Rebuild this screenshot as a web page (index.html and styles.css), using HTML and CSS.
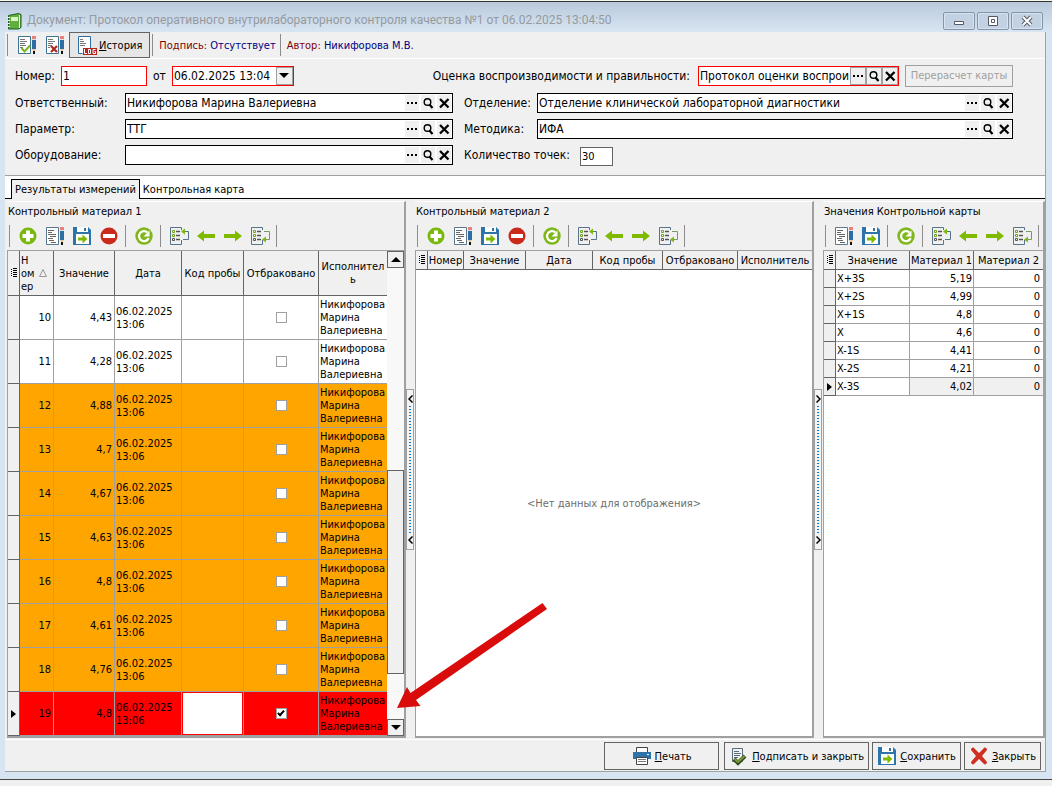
FILE: index.html
```html
<!DOCTYPE html>
<html lang="ru">
<head>
    <meta charset="UTF-8">
    <meta name="viewport" content="width=device-width, initial-scale=1.0">
    <title>Протокол оперативного внутрилабораторного контроля качества</title>
    <link rel="stylesheet" href="styles.css">
</head>
<body>
    <!-- Icon set -->
    <svg class="sprite" aria-hidden="true">
        <symbol id="i-sheet" viewBox="0 0 20 20">
            <path d="M1.5 1.5h12v17h-12z" fill="#fff" stroke="#5a7890"/>
            <path d="M3 4.500h6M3 6.500h4M3 8.500h8M5 10.500h6M3 12.500h5M4 14.500h5M6 16.500h5" stroke="#666"/>
        </symbol>
        <symbol id="i-pen" viewBox="0 0 4 18">
            <path d="M0 0h4v3H0z" fill="#e8807c"/>
            <path d="M0 3h4v1H0z" fill="#ddd"/>
            <path d="M0 4h4v9H0z" fill="#2e6da4"/>
            <path d="M0 13h4l-1 2H1z" fill="#e8c9a0"/>
            <path d="M1 15h2v3H1z" fill="#111"/>
        </symbol>
        <symbol id="i-edit" viewBox="0 0 20 20">
            <use href="#i-sheet"/>
            <use href="#i-pen" x="15" y="1" width="4" height="18"/>
        </symbol>
        <symbol id="i-sign" viewBox="0 0 20 20">
            <path d="M1.500 1.500h12v17h-12z" fill="#fff" stroke="#3f7390"/>
            <path d="M3 4.500h5M3 6.500h7M3 8.500h5M3 10.500h6M3 12.500h3" stroke="#777"/>
            <path d="M4.500 13l3 3.500 5.500-6" fill="none" stroke="#7ab51d" stroke-width="2"/>
            <use href="#i-pen" x="15" y="1" width="4" height="18"/>
        </symbol>
        <symbol id="i-unsign" viewBox="0 0 20 20">
            <path d="M1.500 1.500h12v17h-12z" fill="#fff" stroke="#3f7390"/>
            <path d="M3 4.500h5M3 6.500h7M3 8.500h5M3 10.500h4M3 12.500h2" stroke="#777"/>
            <path d="M6 11l6 6M12 11l-6 6" stroke="#b3271e" stroke-width="2.200"/>
            <use href="#i-pen" x="15" y="1" width="4" height="18"/>
        </symbol>
        <symbol id="i-log" viewBox="0 0 20 20">
            <path d="M1.500 18.500v-17h12v12M1.500 18.500h4" fill="none" stroke="#2e6da4"/>
            <path d="M2 2h11v11H6v5H2z" fill="#fff"/>
            <path d="M3 4.500h3M3 6.500h4M3 8.500h6M3 10.500h5" stroke="#777"/>
            <path d="M6 13h14v7H6z" fill="#b3271e"/>
            <path d="M7.500 14v4.500H10M11.500 14.500h2v4h-2zM18.500 14.500h-2.500v4h2.500v-2h-1" fill="none" stroke="#fff"/>
        </symbol>
        <symbol id="i-add" viewBox="0 0 20 20">
            <circle cx="10" cy="10" r="8.500" fill="#7ab80e"/>
            <path d="M10 4.500v11M4.500 10h11" stroke="#fff" stroke-width="4"/>
        </symbol>
        <symbol id="i-remove" viewBox="0 0 20 20">
            <circle cx="10" cy="10" r="8.500" fill="#c92a1c"/>
            <path d="M4 10h12" stroke="#fff" stroke-width="4"/>
        </symbol>
        <symbol id="i-save" viewBox="0 0 20 20">
            <path d="M1 1h15l3 3v15H1z" fill="#2d74aa"/>
            <path d="M5 1h11v5H5zM4 8h13v10H4z" fill="#fff"/>
            <path d="M12 2h2v3h-2z" fill="#2d74aa"/>
            <path d="M6 11.500h4.500V8.500l5 4.500-5 4.500v-3H6z" fill="#7fba00"/>
        </symbol>
        <symbol id="i-refresh" viewBox="0 0 20 20">
            <circle cx="10" cy="10" r="8.700" fill="#7fb71c"/>
            <path d="M13.500 6.500A5 5 0 1 0 14.700 12" fill="none" stroke="#fff" stroke-width="2.200"/>
            <path d="M15.500 4.500v6h-6z" fill="#fff"/>
        </symbol>
        <symbol id="i-tree" viewBox="0 0 20 20">
            <path d="M12.500 4V1.500h-11v17h11V14" fill="none" stroke="#58748a"/>
            <path d="M3.500 4.500h2v2h-2zM3.500 8.500h2v2h-2z" fill="none" stroke="#6fa51b"/>
            <path d="M3.500 12.500h2v2h-2z" fill="none" stroke="#555"/>
            <path d="M7 5.500h4M7 9.500h4M7 13.500h4" stroke="#555" stroke-width="1.400"/>
        </symbol>
        <symbol id="i-first" viewBox="0 0 20 20">
            <use href="#i-tree"/>
            <path d="M14 13.500h5.500v-8H13" fill="none" stroke="#58748a"/>
            <path d="M12 5.500l4-3v6z" fill="#7ab80e"/>
        </symbol>
        <symbol id="i-last" viewBox="0 0 20 20">
            <use href="#i-tree"/>
            <path d="M14 5.500h5.500v8H15" fill="none" stroke="#7a9a60"/>
            <path d="M12 13.500l4-3v6z" fill="#7ab80e"/>
        </symbol>
        <symbol id="i-left" viewBox="0 0 20 20">
            <path d="M1 10l7-5.500v3.500h11v4H8v3.500z" fill="#7fba00"/>
        </symbol>
        <symbol id="i-right" viewBox="0 0 20 20">
            <path d="M19 10l-7-5.500v3.500H1v4h11v3.500z" fill="#7fba00"/>
        </symbol>
        <symbol id="i-print" viewBox="0 0 20 20">
            <path d="M4.500 1.500h11v6h-11z" fill="#fff" stroke="#444"/>
            <path d="M1 6h18v7H1z" fill="#2e74ab"/>
            <path d="M15 8h2v1h-2z" fill="#fff"/>
            <path d="M4.500 11.500h11v7h-11z" fill="#fff" stroke="#444"/>
            <path d="M6 13.500h8M6 15.500h8" stroke="#777"/>
        </symbol>
        <symbol id="i-approve" viewBox="0 0 20 20">
            <path d="M3.500 2.500h10v13h-10z" fill="#eef2f5" stroke="#5a6c78"/>
            <path d="M5 5.500h5M5 7.500h7M5 9.500h6M5 11.500h4" stroke="#5a6c78"/>
            <path d="M5 13l4 4 7-7" fill="none" stroke="#35491c" stroke-width="4"/>
            <path d="M5.500 13l3.500 3 6.500-6" fill="none" stroke="#7a9e3d" stroke-width="2"/>
        </symbol>
        <symbol id="i-cancel" viewBox="0 0 20 20">
            <path d="M2 3c1-1 2-2 3-1l5 5 5-5c1-1 3 0 3 2l-5 6 5 6c0 2-2 3-3 2l-5-5-5 5c-1 1-3 0-3-2l5-6-5-6z" fill="#cf3021"/>
        </symbol>
        <symbol id="i-book" viewBox="0 0 16 18">
            <path d="M1.500 3.500l10-2 2.500 1v13l-2.500 1.500h-10z" fill="#5fae3e" stroke="#1f5b25"/>
            <path d="M4 5h7v4H4z" fill="#d8f3c8"/>
            <path d="M12.500 3v13" stroke="#f4f4ec"/>
            <path d="M0 5.500h3M0 8.500h3M0 11.500h3M0 14.500h3" stroke="#eee"/>
        </symbol>
        <symbol id="i-dots" viewBox="0 0 14 14">
            <path d="M2 6h2v2H2zM6 6h2v2H6zM10 6h2v2h-2z"/>
        </symbol>
        <symbol id="i-find" viewBox="0 0 14 14">
            <circle cx="6.500" cy="6" r="3.300" fill="none" stroke="#000" stroke-width="1.400"/>
            <path d="M8.500 8.500l3 3.500" stroke="#000" stroke-width="2.200"/>
        </symbol>
        <symbol id="i-x" viewBox="0 0 14 14">
            <path d="M3 3l8.500 8.500M11.500 3L3 11.500" stroke="#000" stroke-width="2.300"/>
        </symbol>
        <symbol id="i-rows" viewBox="0 0 8 10">
            <path d="M1 1.500h1M1 3.500h1M1 5.500h1M1 7.500h1M3 .500h4M3 2.500h4M3 4.500h4M3 6.500h4M3 8.500h4" stroke="#000"/>
        </symbol>
    </svg>

    <div class="window">
        <header class="titlebar">
            <svg class="book"><use href="#i-book"/></svg>
            <h1>Документ: Протокол оперативного внутрилабораторного контроля качества №1 от 06.02.2025 13:04:50</h1>
            <button type="button" class="win-btn" aria-label="Свернуть"><svg viewBox="0 0 14 12"><path d="M2.500 6.500h9v3h-9z" fill="#fff" stroke="#555a66"/></svg></button>
            <button type="button" class="win-btn" aria-label="Развернуть"><svg viewBox="0 0 14 12"><path d="M2.500 1.500h9v9h-9z" fill="#fff" stroke="#555a66"/><path d="M5.500 4.500h3v3h-3z" fill="#fff" stroke="#555a66"/></svg></button>
            <button type="button" class="win-btn" aria-label="Закрыть окно"><svg viewBox="0 0 14 12"><path d="M3 2l8 8M11 2l-8 8" stroke="#555a66" stroke-width="4"/><path d="M3 2l8 8M11 2l-8 8" stroke="#fff" stroke-width="2"/></svg></button>
        </header>

        <div class="client">
            <div class="main-tools">
                <i class="sep"></i>
                <button type="button" class="tool" aria-label="Подписать"><svg class="icon"><use href="#i-sign"/></svg></button>
                <button type="button" class="tool" aria-label="Снять подпись"><svg class="icon"><use href="#i-unsign"/></svg></button>
                <button type="button" class="history"><svg class="icon"><use href="#i-log"/></svg><span><u>И</u>стория</span></button>
                <i class="sep"></i>
                <p class="info">Подпись: <span>Отсутствует</span></p>
                <i class="sep"></i>
                <p class="info">Автор: <span>Никифорова М.В.</span></p>
            </div>

            <form class="doc-form">
                <div class="form-row">
                    <label for="num">Номер:</label>
                    <input type="text" id="num" class="num required" value="1">
                    <label for="date">от</label>
                    <div class="date required">
                        <input type="text" id="date" value="06.02.2025 13:04">
                        <button type="button" aria-label="Календарь"><svg viewBox="0 0 10 6"><path d="M0 0h10L5 5z"/></svg></button>
                    </div>
                    <label for="score" class="push">Оценка воспроизводимости и правильности:</label>
                    <div class="lookup framed required score">
                        <input type="text" id="score" value="Протокол оценки воспроизводимости">
                        <button type="button" aria-label="Выбрать"><svg><use href="#i-dots"/></svg></button>
                        <button type="button" aria-label="Найти"><svg><use href="#i-find"/></svg></button>
                        <button type="button" aria-label="Очистить"><svg><use href="#i-x"/></svg></button>
                    </div>
                    <button type="button" class="recalc" disabled>Перерасчет карты</button>
                </div>
                <div class="form-grid">
                    <label for="person">Ответственный:</label>
                    <div class="lookup">
                        <input type="text" id="person" value="Никифорова Марина Валериевна">
                        <button type="button" aria-label="Выбрать"><svg><use href="#i-dots"/></svg></button>
                        <button type="button" aria-label="Найти"><svg><use href="#i-find"/></svg></button>
                        <button type="button" aria-label="Очистить"><svg><use href="#i-x"/></svg></button>
                    </div>
                    <label for="dept">Отделение:</label>
                    <div class="lookup">
                        <input type="text" id="dept" value="Отделение клинической лабораторной диагностики">
                        <button type="button" aria-label="Выбрать"><svg><use href="#i-dots"/></svg></button>
                        <button type="button" aria-label="Найти"><svg><use href="#i-find"/></svg></button>
                        <button type="button" aria-label="Очистить"><svg><use href="#i-x"/></svg></button>
                    </div>
                    <label for="param">Параметр:</label>
                    <div class="lookup">
                        <input type="text" id="param" value="ТТГ">
                        <button type="button" aria-label="Выбрать"><svg><use href="#i-dots"/></svg></button>
                        <button type="button" aria-label="Найти"><svg><use href="#i-find"/></svg></button>
                        <button type="button" aria-label="Очистить"><svg><use href="#i-x"/></svg></button>
                    </div>
                    <label for="method">Методика:</label>
                    <div class="lookup">
                        <input type="text" id="method" value="ИФА">
                        <button type="button" aria-label="Выбрать"><svg><use href="#i-dots"/></svg></button>
                        <button type="button" aria-label="Найти"><svg><use href="#i-find"/></svg></button>
                        <button type="button" aria-label="Очистить"><svg><use href="#i-x"/></svg></button>
                    </div>
                    <label for="device">Оборудование:</label>
                    <div class="lookup">
                        <input type="text" id="device" value="">
                        <button type="button" aria-label="Выбрать"><svg><use href="#i-dots"/></svg></button>
                        <button type="button" aria-label="Найти"><svg><use href="#i-find"/></svg></button>
                        <button type="button" aria-label="Очистить"><svg><use href="#i-x"/></svg></button>
                    </div>
                    <div class="points">
                        <label for="points">Количество точек:</label>
                        <input type="text" id="points" value="30">
                    </div>
                </div>
            </form>

            <div class="tabs" role="tablist">
                <button type="button" role="tab" aria-selected="true" class="tab active">Результаты измерений</button>
                <button type="button" role="tab" aria-selected="false" class="tab">Контрольная карта</button>
            </div>

            <main class="panels">
                <section class="panel">
                    <h2>Контрольный материал 1</h2>
                    <div class="tools">
                        <i class="sep"></i>
                        <button type="button" class="tool" aria-label="Добавить"><svg class="icon"><use href="#i-add"/></svg></button>
                        <button type="button" class="tool" aria-label="Изменить"><svg class="icon"><use href="#i-edit"/></svg></button>
                        <button type="button" class="tool" aria-label="Сохранить строку"><svg class="icon"><use href="#i-save"/></svg></button>
                        <button type="button" class="tool" aria-label="Удалить"><svg class="icon"><use href="#i-remove"/></svg></button>
                        <i class="sep"></i>
                        <button type="button" class="tool" aria-label="Обновить"><svg class="icon"><use href="#i-refresh"/></svg></button>
                        <i class="sep"></i>
                        <button type="button" class="tool" aria-label="Первая"><svg class="icon"><use href="#i-first"/></svg></button>
                        <button type="button" class="tool" aria-label="Предыдущая"><svg class="icon"><use href="#i-left"/></svg></button>
                        <button type="button" class="tool" aria-label="Следующая"><svg class="icon"><use href="#i-right"/></svg></button>
                        <button type="button" class="tool" aria-label="Последняя"><svg class="icon"><use href="#i-last"/></svg></button>
                        <i class="sep"></i>
                    </div>
                    <div class="grid-box">
                        <table class="grid results">
                            <colgroup><col class="c-mark"><col class="c-num"><col class="c-val"><col class="c-date"><col class="c-code"><col class="c-rej"><col></colgroup>
                            <thead>
                                <tr>
                                    <th><svg class="rows"><use href="#i-rows"/></svg></th>
                                    <th><div class="sorted"><span>Н<br>ом<br>ер</span><svg viewBox="0 0 8 8"><path d="M4 .500L7.500 7.500h-7z" fill="none" stroke="#999"/></svg></div></th>
                                    <th>Значение</th>
                                    <th>Дата</th>
                                    <th>Код пробы</th>
                                    <th>Отбраковано</th>
                                    <th>Исполнител<br>ь</th>
                                </tr>
                            </thead>
                            <tbody>
                                <tr><td></td><td>10</td><td>4,43</td><td>06.02.2025 13:06</td><td></td><td><input type="checkbox" aria-label="Отбраковано 10"></td><td>Никифорова Марина Валериевна</td></tr>
                                <tr><td></td><td>11</td><td>4,28</td><td>06.02.2025 13:06</td><td></td><td><input type="checkbox" aria-label="Отбраковано 11"></td><td>Никифорова Марина Валериевна</td></tr>
                                <tr class="warn"><td></td><td>12</td><td>4,88</td><td>06.02.2025 13:06</td><td></td><td><input type="checkbox" aria-label="Отбраковано 12"></td><td>Никифорова Марина Валериевна</td></tr>
                                <tr class="warn"><td></td><td>13</td><td>4,7</td><td>06.02.2025 13:06</td><td></td><td><input type="checkbox" aria-label="Отбраковано 13"></td><td>Никифорова Марина Валериевна</td></tr>
                                <tr class="warn"><td></td><td>14</td><td>4,67</td><td>06.02.2025 13:06</td><td></td><td><input type="checkbox" aria-label="Отбраковано 14"></td><td>Никифорова Марина Валериевна</td></tr>
                                <tr class="warn"><td></td><td>15</td><td>4,63</td><td>06.02.2025 13:06</td><td></td><td><input type="checkbox" aria-label="Отбраковано 15"></td><td>Никифорова Марина Валериевна</td></tr>
                                <tr class="warn"><td></td><td>16</td><td>4,8</td><td>06.02.2025 13:06</td><td></td><td><input type="checkbox" aria-label="Отбраковано 16"></td><td>Никифорова Марина Валериевна</td></tr>
                                <tr class="warn"><td></td><td>17</td><td>4,61</td><td>06.02.2025 13:06</td><td></td><td><input type="checkbox" aria-label="Отбраковано 17"></td><td>Никифорова Марина Валериевна</td></tr>
                                <tr class="warn"><td></td><td>18</td><td>4,76</td><td>06.02.2025 13:06</td><td></td><td><input type="checkbox" aria-label="Отбраковано 18"></td><td>Никифорова Марина Валериевна</td></tr>
                                <tr class="fail"><td><i class="current"></i></td><td>19</td><td>4,8</td><td>06.02.2025 13:06</td><td class="editing"></td><td><input type="checkbox" aria-label="Отбраковано 19" checked></td><td>Никифорова Марина Валериевна</td></tr>
                            </tbody>
                        </table>
                        <div class="scrollbar">
                            <button type="button" aria-label="Вверх"><svg viewBox="0 0 10 6"><path d="M0 5h10L5 0z"/></svg></button>
                            <div class="track-top"></div>
                            <div class="thumb"></div>
                            <div class="track-bottom"></div>
                            <button type="button" aria-label="Вниз"><svg viewBox="0 0 10 6"><path d="M0 0h10L5 5z"/></svg></button>
                        </div>
                    </div>
                </section>

                <div class="splitter">
                    <button type="button" aria-label="Свернуть левую панель">
                        <svg viewBox="0 0 5 8"><path d="M4.500 .500L1 4l3.500 3.500" fill="none" stroke="#000" stroke-width="1.500"/></svg>
                        <i></i>
                        <svg viewBox="0 0 5 8"><path d="M4.500 .500L1 4l3.500 3.500" fill="none" stroke="#000" stroke-width="1.500"/></svg>
                    </button>
                </div>

                <section class="panel">
                    <h2>Контрольный материал 2</h2>
                    <div class="tools">
                        <i class="sep"></i>
                        <button type="button" class="tool" aria-label="Добавить"><svg class="icon"><use href="#i-add"/></svg></button>
                        <button type="button" class="tool" aria-label="Изменить"><svg class="icon"><use href="#i-edit"/></svg></button>
                        <button type="button" class="tool" aria-label="Сохранить строку"><svg class="icon"><use href="#i-save"/></svg></button>
                        <button type="button" class="tool" aria-label="Удалить"><svg class="icon"><use href="#i-remove"/></svg></button>
                        <i class="sep"></i>
                        <button type="button" class="tool" aria-label="Обновить"><svg class="icon"><use href="#i-refresh"/></svg></button>
                        <i class="sep"></i>
                        <button type="button" class="tool" aria-label="Первая"><svg class="icon"><use href="#i-first"/></svg></button>
                        <button type="button" class="tool" aria-label="Предыдущая"><svg class="icon"><use href="#i-left"/></svg></button>
                        <button type="button" class="tool" aria-label="Следующая"><svg class="icon"><use href="#i-right"/></svg></button>
                        <button type="button" class="tool" aria-label="Последняя"><svg class="icon"><use href="#i-last"/></svg></button>
                        <i class="sep"></i>
                    </div>
                    <div class="grid-box column">
                        <table class="grid">
                            <colgroup><col class="c-mark"><col class="c-num2"><col class="c-val2"><col class="c-date"><col class="c-code2"><col class="c-rej"><col></colgroup>
                            <thead>
                                <tr>
                                    <th><svg class="rows"><use href="#i-rows"/></svg></th>
                                    <th>Номер</th>
                                    <th>Значение</th>
                                    <th>Дата</th>
                                    <th>Код пробы</th>
                                    <th>Отбраковано</th>
                                    <th>Исполнитель</th>
                                </tr>
                            </thead>
                        </table>
                        <p class="empty">&lt;Нет данных для отображения&gt;</p>
                    </div>
                </section>

                <div class="splitter">
                    <button type="button" aria-label="Свернуть правую панель">
                        <svg viewBox="0 0 5 8"><path d="M.500 .500L4 4 .500 7.500" fill="none" stroke="#000" stroke-width="1.500"/></svg>
                        <i></i>
                        <svg viewBox="0 0 5 8"><path d="M.500 .500L4 4 .500 7.500" fill="none" stroke="#000" stroke-width="1.500"/></svg>
                    </button>
                </div>

                <section class="panel">
                    <h2>Значения Контрольной карты</h2>
                    <div class="tools">
                        <i class="sep"></i>
                        <button type="button" class="tool" aria-label="Изменить"><svg class="icon"><use href="#i-edit"/></svg></button>
                        <button type="button" class="tool" aria-label="Сохранить строку"><svg class="icon"><use href="#i-save"/></svg></button>
                        <i class="sep"></i>
                        <button type="button" class="tool" aria-label="Обновить"><svg class="icon"><use href="#i-refresh"/></svg></button>
                        <i class="sep"></i>
                        <button type="button" class="tool" aria-label="Первая"><svg class="icon"><use href="#i-first"/></svg></button>
                        <button type="button" class="tool" aria-label="Предыдущая"><svg class="icon"><use href="#i-left"/></svg></button>
                        <button type="button" class="tool" aria-label="Следующая"><svg class="icon"><use href="#i-right"/></svg></button>
                        <button type="button" class="tool" aria-label="Последняя"><svg class="icon"><use href="#i-last"/></svg></button>
                        <i class="sep"></i>
                    </div>
                    <div class="grid-box column">
                        <table class="grid limits">
                            <colgroup><col class="c-mark"><col class="c-name"><col class="c-mat"><col></colgroup>
                            <thead>
                                <tr><th><svg class="rows"><use href="#i-rows"/></svg></th><th>Значение</th><th>Материал 1</th><th>Материал 2</th></tr>
                            </thead>
                            <tbody>
                                <tr><td></td><td>X+3S</td><td>5,19</td><td>0</td></tr>
                                <tr><td></td><td>X+2S</td><td>4,99</td><td>0</td></tr>
                                <tr><td></td><td>X+1S</td><td>4,8</td><td>0</td></tr>
                                <tr><td></td><td>X</td><td>4,6</td><td>0</td></tr>
                                <tr><td></td><td>X-1S</td><td>4,41</td><td>0</td></tr>
                                <tr><td></td><td>X-2S</td><td>4,21</td><td>0</td></tr>
                                <tr class="selected"><td><i class="current"></i></td><td>X-3S</td><td>4,02</td><td>0</td></tr>
                            </tbody>
                        </table>
                    </div>
                </section>

                <!-- Pointer to the rejected measurement -->
                <svg class="pointer" viewBox="0 0 152 106" aria-hidden="true">
                    <path d="M0 106L10 85l3.500 6L145.500 1l4.500 6L19 98l4.500 6z" fill="#d90b0b"/>
                </svg>
            </main>

            <footer class="actions">
                <button type="button" class="print"><svg class="icon"><use href="#i-print"/></svg><span><u>П</u>ечать</span></button>
                <button type="button"><svg class="icon"><use href="#i-approve"/></svg><span><u>П</u>одписать и закрыть</span></button>
                <button type="button"><svg class="icon"><use href="#i-save"/></svg><span><u>С</u>охранить</span></button>
                <button type="button"><svg class="icon"><use href="#i-cancel"/></svg><span><u>З</u>акрыть</span></button>
            </footer>
        </div>
    </div>
</body>
</html>
```

FILE: styles.css
```css
* {
    box-sizing: border-box;
}
body {
    margin: 0;
    background: #f0f0f0;
    color: #000;
    font-family: "DejaVu Sans Condensed", "Noto Sans", sans-serif;
    font-size: 11px;
    line-height: 13px;
}
h1, h2, p {
    margin: 0;
    font-size: inherit;
    font-weight: normal;
}
button, input {
    font: inherit;
    color: inherit;
    margin: 0;
    padding: 0;
    border: none;
    background: none;
    border-radius: 0;
}
.sprite {
    display: block;
    width: 0;
    height: 0;
}
.icon {
    display: block;
    width: 20px;
    height: 20px;
}

/* Window frame */
.window {
    display: flex;
    flex-direction: column;
    min-height: 100vh;
    padding: 2px 6px 8px 5px;
    background: linear-gradient(#b8c9db, #d7e4f2 30px);
    border-top: 1px solid #f4f8f0;
    border-bottom: 7px solid #f0f0f0;
    box-shadow: inset 0 1px #333, inset 0 -1px #444;
}
.titlebar {
    display: flex;
    align-items: center;
    gap: 2px;
    height: 29px;
    padding: 6px 3px 0 2px;
}
.titlebar h1 {
    flex: 1;
    padding-left: 2px;
    font-family: Roboto, "Noto Sans", sans-serif;
    font-size: 12px;
    color: #969a9f;
    white-space: nowrap;
}
.book {
    width: 16px;
    height: 18px;
}
.win-btn {
    display: flex;
    align-items: center;
    justify-content: center;
    width: 32px;
    height: 18px;
    border: 1px solid #8494a8;
    border-radius: 2px;
    background: #c3d2e3;
    box-shadow: inset 0 0 0 1px #d8e3ef;
}
.win-btn svg {
    width: 14px;
    height: 12px;
}
.client {
    display: flex;
    flex: 1;
    flex-direction: column;
    background: #f0f0f0;
    border-right: 1px solid #a0a0a0;
    border-bottom: 1px solid #a0a0a0;
}

/* Toolbars */
.main-tools, .tools {
    display: flex;
    align-items: center;
}
.main-tools {
    height: 27px;
    border-bottom: 1px solid #fff;
}
.tools {
    height: 30px;
    padding-top: 2px;
}
.sep {
    flex: none;
    width: 1px;
    height: 22px;
    margin: 0 4px 0 3px;
    background: #8c8c8c;
}
.tools .sep:first-child {
    margin-left: 2px;
}
.main-tools .sep {
    margin: 0 5px 0 2px;
}
.tool {
    display: flex;
    justify-content: center;
    width: 27px;
}
.main-tools .tool {
    width: 28px;
}
.history {
    display: flex;
    align-items: center;
    gap: 2px;
    height: 26px;
    padding: 0 7px;
    border: 1px solid #646464;
    background: #e6e6e6;
}
.info {
    padding: 0 2px 0 1px;
    color: #800000;
    white-space: nowrap;
}
.info span {
    color: #000080;
}

/* Document fields */
.doc-form {
    padding: 5px 32px 10px 10px;
    border-bottom: 1px solid #a0a0a0;
    font-size: 12px;
    line-height: 18px;
}
.doc-form label {
    white-space: nowrap;
}
.doc-form input {
    min-width: 0;
    height: 18px;
    padding: 0 1px;
    background: #fff;
}
.form-row {
    display: flex;
    align-items: center;
    gap: 6px;
    height: 23px;
    margin-bottom: 6px;
}
.push {
    margin-left: auto;
}
.doc-form .num {
    width: 86px;
    height: 20px;
}
.date {
    display: flex;
    width: 122px;
}
.date input {
    flex: 1;
}
.date button {
    display: flex;
    align-items: center;
    justify-content: center;
    width: 17px;
    border: 1px solid #a0a0a0;
    background: #f0f0f0;
}
.date svg {
    width: 10px;
    height: 6px;
}
.form-grid {
    display: grid;
    grid-template-columns: 110px 328px 84px 1fr;
    grid-auto-rows: 20px;
    row-gap: 6px;
}
.form-grid label {
    line-height: 20px;
}
.form-grid > label:nth-of-type(2n) {
    padding-left: 11px;
}
.lookup {
    display: flex;
    align-items: center;
    gap: 2px;
    height: 20px;
    padding-right: 1px;
    border: 1px solid #000;
    background: #fff;
}
.lookup input {
    flex: 1;
}
.lookup button {
    display: flex;
    width: 14px;
    height: 16px;
    align-items: center;
    background: #f0f0f0;
}
.lookup button svg {
    width: 14px;
    height: 14px;
}
.framed {
    gap: 0;
    padding-right: 0;
}
.framed button {
    width: 16px;
    height: 18px;
    border: 1px solid #a0a0a0;
}
.score {
    width: 201px;
    margin-left: 2px;
}
.required {
    border: 1px solid #f00;
}
.recalc {
    width: 108px;
    height: 22px;
    border: 1px solid #a0a0a0;
    color: #a0a0a0;
    font-size: 11px;
    white-space: nowrap;
}
.points {
    display: flex;
    grid-column: span 2;
    gap: 10px;
    padding-left: 11px;
}
.doc-form .points input {
    width: 33px;
    height: 19px;
    margin-top: 2px;
    border: 1px solid #646464;
    font-size: 11px;
}

/* Tabs */
.tabs {
    display: flex;
    align-items: flex-end;
    height: 23px;
    padding-left: 6px;
    border-bottom: 1px solid #000;
    background: #fff;
}
.tab {
    height: 18px;
    padding: 0 3px;
    white-space: nowrap;
}
.tab.active {
    height: 20px;
    margin-bottom: -1px;
    border: 1px solid #000;
    border-bottom: none;
    background: #f0f0f0;
}

/* Measurement panels */
.panels {
    position: relative;
    display: grid;
    flex: 1;
    grid-template-columns: 399px 9px minmax(399px, 1fr) 9px 222px;
    padding: 2px 0 1px 2px;
    border-bottom: 1px solid #fff;
}
.panel {
    display: flex;
    flex-direction: column;
    min-width: 0;
    border-top: 1px solid #fff;
    border-right: 2px solid #a0a0a0;
}
.panel h2 {
    height: 18px;
    padding: 3px 1px 0;
    white-space: nowrap;
}
.grid-box {
    display: flex;
    flex: 1;
    background: #fff;
    border: solid #a0a0a0;
    border-width: 1px 0 2px 1px;
}
.column {
    flex-direction: column;
}
.grid {
    width: 100%;
    border-collapse: separate;
    border-spacing: 0;
    table-layout: fixed;
}
.grid th, .grid td {
    padding: 0;
    border: solid #a0a0a0;
    border-width: 0 1px 1px 0;
    font-weight: normal;
}
.grid th {
    height: 19px;
    border-color: #646464;
    background: #f0f0f0;
    white-space: nowrap;
}
.grid td:first-child {
    border-color: #646464;
    background: #f0f0f0;
}
.grid th:last-child, .grid td:last-child {
    border-right: none;
}
.rows {
    display: block;
    width: 8px;
    height: 10px;
    margin: 0 auto;
}
.c-mark { width: 12px; }
.c-num { width: 34px; }
.c-val { width: 61px; }
.c-date { width: 67px; }
.c-code { width: 62px; }
.c-rej { width: 75px; }
.c-num2 { width: 36px; }
.c-val2 { width: 62px; }
.c-code2 { width: 70px; }
.c-name { width: 74px; }
.c-mat { width: 64px; }
.results th {
    height: 45px;
}
.results td {
    height: 44px;
    padding: 0 1px;
}
.results td:nth-child(2), .results td:nth-child(3) {
    padding-right: 2px;
    text-align: right;
}
.results td:nth-child(6) {
    text-align: center;
}
.sorted {
    display: flex;
    align-items: center;
    justify-content: space-between;
    padding: 0 6px 0 1px;
    text-align: left;
}
.sorted svg {
    width: 8px;
    height: 8px;
}
.warn td:not(:first-child) {
    background: #ffa500;
}
.fail td:not(:first-child) {
    background: #f00;
}
.fail td.editing:not(:first-child) {
    background: #fff;
    box-shadow: inset 0 0 0 1px #f00;
}
.results input {
    appearance: none;
    display: block;
    width: 11px;
    height: 11px;
    margin: 0 auto;
    border: 1px solid #a0a0a0;
    background: #fff;
}
.results input:checked::after {
    content: "";
    display: block;
    width: 2px;
    height: 5px;
    margin: 0 0 0 2px;
    border: solid #000;
    border-width: 0 2px 2px 0;
    box-sizing: content-box;
    transform: rotate(42deg);
}
.current {
    display: block;
    width: 0;
    margin: 0 auto;
    border: solid transparent;
    border-width: 4px 0 4px 5px;
    border-left-color: #000;
}
.limits td {
    height: 18px;
    padding: 0 1px;
    text-align: right;
}
.limits td:nth-child(2) {
    text-align: left;
}
.limits td:last-child {
    padding-right: 3px;
}
.selected td:nth-child(n+3) {
    background: #f0f0f0;
}
.empty {
    display: flex;
    flex: 1;
    align-items: center;
    justify-content: center;
    color: #6d6d6d;
}

/* Scrollbar of the results list */
.scrollbar {
    display: flex;
    flex: none;
    flex-direction: column;
    width: 17px;
    background: #f8f8f8;
}
.scrollbar button {
    display: flex;
    align-items: center;
    justify-content: center;
    height: 17px;
    border: 1px solid #646464;
    background: #f0f0f0;
}
.scrollbar svg {
    width: 10px;
    height: 6px;
}
.thumb {
    flex: 203;
    border: 1px solid #646464;
    background: #f0f0f0;
}
.track-top {
    flex: 202;
}
.track-bottom {
    flex: 45;
}
.splitter {
    display: flex;
    align-items: center;
}
.splitter button {
    display: flex;
    flex-direction: column;
    align-items: center;
    width: 8px;
    height: 161px;
    padding: 5px 0;
    border: 1px solid #a0a0a0;
    background: #f4f4f4;
}
.splitter svg {
    width: 5px;
    height: 8px;
}
.splitter i {
    flex: 1;
    width: 2px;
    margin: 3px 0;
    background: repeating-linear-gradient(#0078d7 0 1px, transparent 1px 3px);
}
.pointer {
    position: absolute;
    left: 392px;
    bottom: 31px;
    width: 152px;
    height: 106px;
}

/* Bottom buttons */
.actions {
    display: flex;
    justify-content: flex-end;
    gap: 3px;
    padding: 2px 4px 1px;
}
.actions button {
    display: flex;
    align-items: center;
    justify-content: center;
    gap: 3px;
    height: 28px;
    padding: 0 4px;
    border: 1px solid #646464;
    white-space: nowrap;
}
.actions .print {
    width: 115px;
    margin-right: 2px;
}
```
